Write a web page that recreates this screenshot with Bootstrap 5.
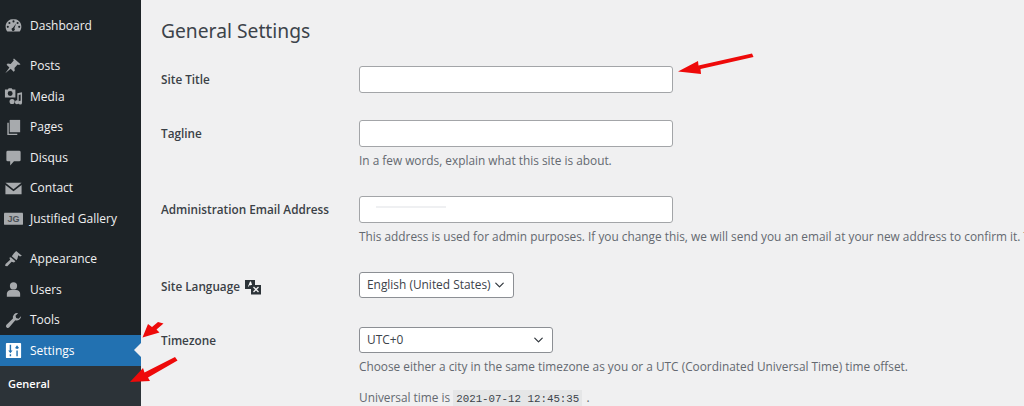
<!DOCTYPE html>
<html lang="en">
<head>
<meta charset="utf-8">
<title>General Settings</title>
<link href="https://cdn.jsdelivr.net/npm/bootstrap@5.3.0/dist/css/bootstrap.min.css" rel="stylesheet">
<style>
html,body{height:406px;overflow:hidden;}
body{background:#f0f0f1;font-family:"Open Sans","Noto Sans",sans-serif;font-size:12px;color:#3c434a;}
.wp-shell{width:1024px;height:406px;overflow:hidden;position:relative;}
.wp-side{width:141px;flex:none;background:#1d2327;padding-top:10px;height:406px;overflow:hidden;}
.wp-item{height:30.6px;color:#f0f0f1;font-size:12px;padding:1px 0 0;}
.wp-item:hover{color:#f0f0f1;}
.wp-ico{width:27px;margin-right:3px;flex:none;display:flex;justify-content:center;color:#a7aaad;}
.wp-ico svg{width:19px;height:19px;fill:currentColor;}
.wp-gap{height:9.6px;flex:none;}
.wp-active{background:#2271b1;color:#fff;position:relative;}
.wp-active .wp-ico{color:#fff;}
.wp-active::after{content:"";position:absolute;right:0;top:50%;margin-top:-7px;border:7px solid transparent;border-right-color:#f0f0f1;border-left-width:0;}
.wp-sub{background:#2c3338;padding-top:5.4px;}
.wp-subitem{height:27px;padding:0 0 0 8px;font-size:11.2px;color:#c3c4c7;display:flex;align-items:center;}
.wp-subitem.is-cur{color:#fff;font-weight:600;font-size:11px;}
.wp-main{padding:16px 0 0 20px;min-width:0;flex:1;overflow:hidden;}
.wp-title{font-size:19.25px;line-height:30px;font-weight:400;color:#3c434a;margin:0 0 20px;white-space:nowrap;font-family:"Noto Sans","Open Sans",sans-serif;}
.wp-row{display:flex;white-space:nowrap;}
.wp-label{width:198px;height:27px;flex:none;font-size:11.75px;font-weight:600;line-height:27px;color:#3a4046;display:flex;align-items:center;gap:4px;}
.wp-label-low{padding-top:2px;}
.wp-field{min-width:0;}
.wp-input.form-control{width:314px;height:27px;min-height:0;padding:0 8px;font-size:12px;border:1px solid #a3a5a8;border-radius:3px;background:#fff;box-shadow:none;}
.wp-input-redacted.form-control{background-image:linear-gradient(#eff0f2,#eff0f2);background-repeat:no-repeat;background-size:70px 2px;background-position:16px 9px;}
.wp-select.form-select{height:26px;padding:0 16px 0 7px;font-size:11.9px;color:#3c434a;border:1px solid #8c8f94;border-radius:3px;background-position:right 7px center;background-size:13px 10px;box-shadow:none;}
.wp-lang{width:155px;}
.wp-tz{width:194px;}
.wp-desc{color:#646970;font-size:11.85px;line-height:20px;margin:3px 0 0;white-space:nowrap;}
.wp-time{font-family:"Liberation Mono",monospace;font-size:10.8px;background:#e5e6e7;color:#3c434a;padding:3px 3px;margin:0 1px 0 0;}
.wp-r1{margin-bottom:27px;}
.wp-r2{margin-bottom:26px;}
.wp-r4{margin-bottom:28px;}
.wp-univ{margin-top:11px;}
.wp-marks{position:absolute;left:0;top:0;width:1024px;height:406px;pointer-events:none;}
.wp-red{fill:#ee0a0a;}
</style>
</head>
<body>
<div class="wp-shell d-flex">
  <aside class="wp-side d-flex flex-column">
    <nav class="nav flex-column flex-nowrap">
      <a class="nav-link wp-item d-flex align-items-center" href="#"><span class="wp-ico"><svg viewBox="0 0 20 20"><path fill-rule="evenodd" d="M10 3.2c-4.600 0-8.300 3.500-8.300 8 0 1.900.7 3.700 1.800 5h13c1.100-1.300 1.800-3.100 1.800-5 0-4.500-3.700-8-8.300-8zM10 4.600a1.100 1.100 0 1 1 0 2.200 1.100 1.100 0 0 1 0-2.200zM5.700 6.300a1.100 1.100 0 1 1 0 2.200 1.100 1.100 0 0 1 0-2.200zM14.300 6.300a1.100 1.100 0 1 1 0 2.200 1.100 1.100 0 0 1 0-2.200zM4 10.300a1.100 1.100 0 1 1 0 2.200 1.100 1.100 0 0 1 0-2.200zM16 10.300a1.100 1.100 0 1 1 0 2.200 1.100 1.100 0 0 1 0-2.200zM12.800 7.800l-1.900 5a1.700 1.700 0 1 1-1.500-.5z"/></svg></span>Dashboard</a>
      <div class="wp-gap"></div>
      <a class="nav-link wp-item d-flex align-items-center" href="#"><span class="wp-ico"><svg viewBox="0 0 20 20"><path d="M10.500 2.600l6.900 6.100-1.600.8-1.500-.6-3.300 3.600.3 3-1.200 1.200-3-3.300-5.800 4.700 4.400-6-3-2.900 1.200-1.300 3.100.4 3.200-3.500-.5-1.500z"/></svg></span>Posts</a>
      <a class="nav-link wp-item d-flex align-items-center" href="#"><span class="wp-ico"><svg viewBox="0 0 20 20"><path fill-rule="evenodd" d="M1 2.500h3l1-1.300h3l1 1.300h3v8.500H1zM6.500 4.200a2.600 2.600 0 1 0 0 5.200 2.600 2.600 0 0 0 0-5.200z"/><path d="M14 6.500l5-1v11a2 2 0 1 1-1.500-1.900V8L15.500 8.400V16a2 2 0 1 1-1.500-1.900zM8.500 12.500a2.700 2.700 0 1 1 0 5.400 2.700 2.700 0 0 1 0-5.400z"/></svg></span>Media</a>
      <a class="nav-link wp-item d-flex align-items-center" href="#"><span class="wp-ico"><svg viewBox="0 0 20 20"><path d="M6 2h11v13H6z"/><path d="M3.500 5H5v11.500h9V18H3.500z"/></svg></span>Pages</a>
      <a class="nav-link wp-item d-flex align-items-center" href="#"><span class="wp-ico"><svg viewBox="0 0 20 20"><path d="M4 3h12a1.500 1.500 0 0 1 1.500 1.500v8A1.500 1.500 0 0 1 16 14h-5.500L6.500 18.500V14H4a1.500 1.500 0 0 1-1.500-1.500v-8A1.500 1.500 0 0 1 4 3z"/></svg></span>Disqus</a>
      <a class="nav-link wp-item d-flex align-items-center" href="#"><span class="wp-ico"><svg viewBox="0 0 20 20"><path d="M1.500 4h17L10 10.800z"/><path d="M1.500 6.200L10 13l8.500-6.800V16h-17z"/></svg></span>Contact</a>
      <a class="nav-link wp-item d-flex align-items-center" href="#"><span class="wp-ico"><svg viewBox="0 0 20 20"><rect x="0" y="4" width="20" height="12.500" rx=".5"/><text x="10" y="13.500" text-anchor="middle" font-family="Liberation Sans,sans-serif" font-size="9.500" font-weight="700" fill="#4a5056">JG</text></svg></span>Justified Gallery</a>
      <div class="wp-gap" style="height:9.4px"></div>
      <a class="nav-link wp-item d-flex align-items-center" href="#"><span class="wp-ico"><svg viewBox="0 0 20 20"><path d="M10.500 4.500L12.800 2l6 5-2 .8L15 6.500l-.8 3.400-1 2-5-4.300zM7.200 8.700l4.800 4.200-1.500 1.400-2.500-1-4.500 4.800-2.300-.3.400-2.100 4.900-4.300-.9-2.200z"/></svg></span>Appearance</a>
      <a class="nav-link wp-item d-flex align-items-center" href="#"><span class="wp-ico"><svg viewBox="0 0 20 20"><circle cx="10" cy="6.200" r="3.800"/><path d="M3 17.500v-3c0-2.300 2-4 4.200-4h5.600c2.200 0 4.200 1.700 4.200 4v3z"/></svg></span>Users</a>
      <a class="nav-link wp-item d-flex align-items-center" href="#"><span class="wp-ico"><svg viewBox="0 0 20 20"><path d="M18 5.500a4.600 4.600 0 0 1-6.100 4.300L5.600 17.200a2 2 0 0 1-3-2.700L9.400 8a4.600 4.600 0 0 1 5.400-5.700l-2.700 2.600.7 2.500 2.500.7 2.600-2.600z"/></svg></span>Tools</a>
      <a class="nav-link wp-item wp-active d-flex align-items-center" href="#"><span class="wp-ico"><svg viewBox="0 0 20 20"><path fill-rule="evenodd" d="M3 2h14a1 1 0 0 1 1 1v14a1 1 0 0 1-1 1H3a1 1 0 0 1-1-1V3a1 1 0 0 1 1-1zM6 4v6H4.500L6.700 13 9 10H7.500V4zM6 14v2h1.500v-2zM13 16V10h1.500v6zM13 8.500V7.500h-1.500L13.700 4.500 16 7.500h-1.500v1z"/></svg></span>Settings</a>
    </nav>
    <div class="wp-sub flex-grow-1">
      <div class="wp-subitem is-cur">General</div>
      <div class="wp-subitem">Writing</div>
    </div>
  </aside>
  <main class="wp-main">
    <h1 class="wp-title">General Settings</h1>
    <div class="wp-row wp-r1">
      <div class="wp-label">Site Title</div>
      <div class="wp-field"><input class="form-control wp-input" type="text" aria-label="Site Title"></div>
    </div>
    <div class="wp-row wp-r2">
      <div class="wp-label">Tagline</div>
      <div class="wp-field"><input class="form-control wp-input" type="text" aria-label="Tagline"><p class="wp-desc">In a few words, explain what this site is about.</p></div>
    </div>
    <div class="wp-row wp-r2">
      <div class="wp-label">Administration Email Address</div>
      <div class="wp-field"><input class="form-control wp-input wp-input-redacted" type="text" aria-label="Email"><p class="wp-desc">This address is used for admin purposes. If you change this, we will send you an email at your new address to confirm it. The new address will not become active until confirmed.</p></div>
    </div>
    <div class="wp-row wp-r4">
      <div class="wp-label wp-label-low">Site Language
        <svg width="18" height="16" viewBox="0 0 18 16" aria-hidden="true"><path fill="#2c3338" d="M1 1h10v9H1z"/><path fill="#fff" d="M4 7.500L6 2.500h1L8.500 7.500h-1l-.4-1.200H5.300L4.900 7.500z"/><path fill="#2c3338" d="M7 6h10v9.500H7z"/><path fill="none" stroke="#f0f0f1" stroke-width="1.300" d="M9.500 8l5 5M14.500 8l-5 5"/></svg>
      </div>
      <div class="wp-field"><select class="form-select wp-select wp-lang" aria-label="Site Language"><option>English (United States)</option></select></div>
    </div>
    <div class="wp-row">
      <div class="wp-label">Timezone</div>
      <div class="wp-field">
        <select class="form-select wp-select wp-tz" aria-label="Timezone"><option>UTC+0</option></select>
        <p class="wp-desc">Choose either a city in the same timezone as you or a UTC (Coordinated Universal Time) time offset.</p>
        <p class="wp-desc wp-univ">Universal time is <code class="wp-time">2021-07-12 12:45:35</code> .</p>
      </div>
    </div>
  </main>
  <svg class="wp-marks" viewBox="0 0 1024 406" aria-hidden="true">
    <path class="wp-red" d="M678 71.500L698 61l.5 4.500L752 53.500l1.500 3.500-53 12 .5 5z"/>
    <path class="wp-red" d="M142.500 337.500L148 324l4 3 6-5 5.500 1.500-7 6 3 3z"/>
    <path class="wp-red" d="M130 382l13-14 1.500 4.500L175 357l2.500 3.500-29.500 17 2 3.500z"/>
  </svg>
</div>
</body>
</html>
